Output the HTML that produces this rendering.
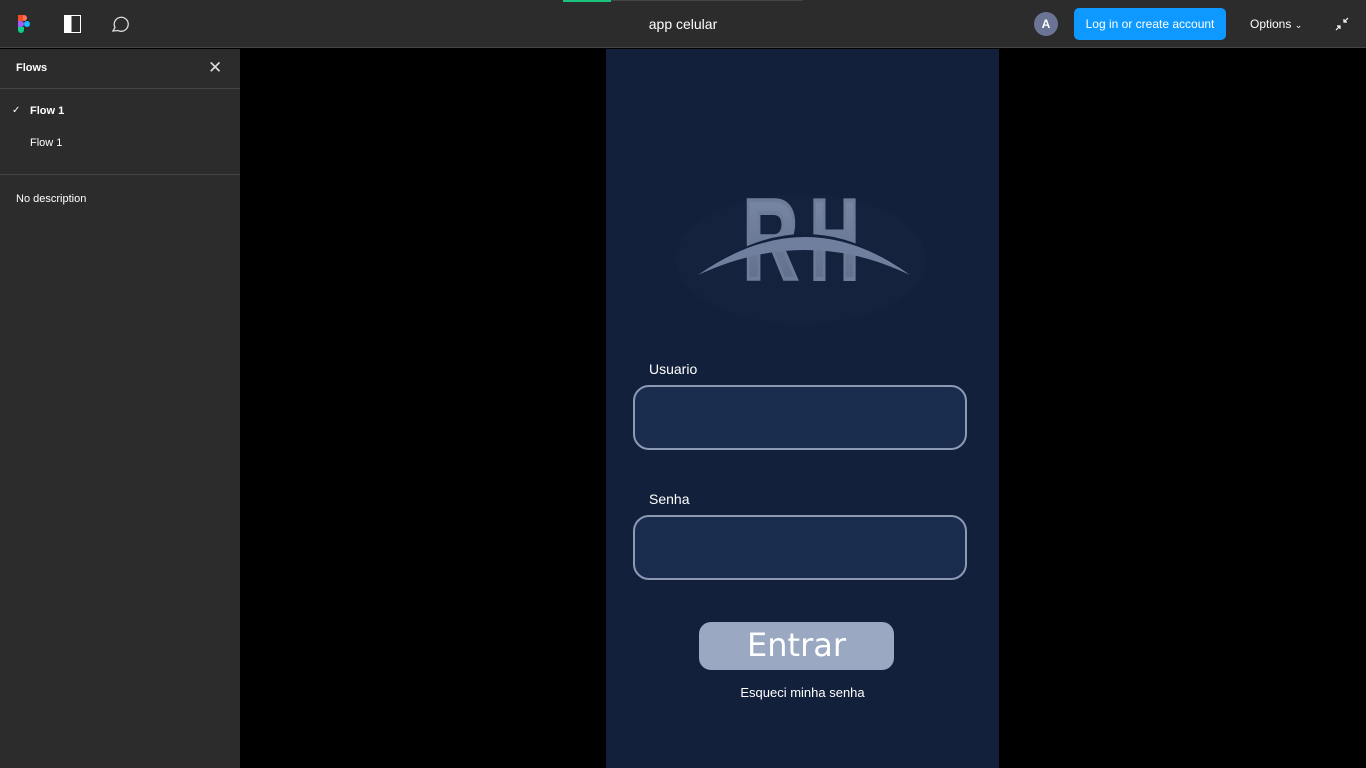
<!DOCTYPE html>
<html><head><meta charset="utf-8"><style>
*{margin:0;padding:0;box-sizing:border-box}
body{width:1366px;height:768px;background:#000;font-family:"Liberation Sans",sans-serif;position:relative;overflow:hidden}
.top{position:absolute;left:0;top:0;width:1366px;height:48px;background:#2c2c2c;border-bottom:1px solid #444}
.side{position:absolute;left:0;top:49px;width:240px;height:719px;background:#2c2c2c;color:#fff;font-size:11px}
.phone{position:absolute;left:606px;top:49px;width:393px;height:719px;background:#13203b}
.lbl{position:absolute;color:#fff;font-size:14px;font-family:"Liberation Sans",sans-serif}
.inp{position:absolute;left:27px;width:334px;height:65px;border:2px solid #8d99b3;border-radius:16px;background:#192c4e}
</style></head><body>
<div class="top">
<div style="position:absolute;left:563px;top:0;width:240px;height:1px;background:#444"></div>
<div style="position:absolute;left:563px;top:0;width:48px;height:2px;background:#1bc47d"></div>
<svg style="position:absolute;left:17px;top:14px" width="14" height="20" viewBox="0 0 14 20">
<rect x="1" y="1" width="6" height="6" rx="3" fill="#f24e1e"/><rect x="4" y="1" width="6" height="6" rx="3" fill="#ff7262"/><rect x="1" y="1" width="5" height="6" fill="#f24e1e"/>
<rect x="1" y="7" width="6" height="6" rx="3" fill="#a259ff"/><rect x="1" y="7" width="4" height="6" fill="#a259ff"/>
<circle cx="10" cy="10" r="3" fill="#1abcfe"/>
<rect x="1" y="13" width="6" height="6" rx="3" fill="#0acf83"/><rect x="1" y="13" width="6" height="3" fill="#0acf83"/></svg>
<div style="position:absolute;left:64px;top:15px;width:17px;height:18px;border:1.5px solid #fff;background:linear-gradient(90deg,#fff 45%,transparent 45%)"></div>
<svg style="position:absolute;left:110px;top:15px" width="19" height="18" viewBox="0 0 19 18"><path d="M3 16 L5 12.5 A7 7 0 1 1 8 15.5 Z" fill="none" stroke="#ddd" stroke-width="1.3"/></svg>
<div style="position:absolute;left:0;width:1366px;top:16px;text-align:center;color:#fff;font-size:14px">app celular</div>
<div style="position:absolute;left:1034px;top:12px;width:24px;height:24px;border-radius:50%;background:#6a7494;color:#fff;font-size:12px;text-align:center;line-height:24px;font-weight:bold">A</div>
<div style="position:absolute;left:1074px;top:8px;width:152px;height:32px;border-radius:5px;background:#0d99ff;color:#fff;font-size:12px;text-align:center;line-height:32px">Log in or create account</div>
<div style="position:absolute;left:1250px;top:17px;color:#fff;font-size:12px">Options <span style="font-size:9px">&#8964;</span></div>
<svg style="position:absolute;left:1334px;top:16px" width="16" height="16" viewBox="0 0 16 16" stroke="#fff" stroke-width="1.2" fill="none"><path d="M2 14 L6 10 M3 10 H6 V13 M14 2 L10 6 M10 3 V6 H13"/></svg>
</div>
<div class="side">
<div style="position:absolute;left:16px;top:13px;font-weight:bold">Flows</div>
<div style="position:absolute;left:208px;top:9px;font-size:17px;color:#ddd">&#10005;</div>
<div style="position:absolute;left:0;top:39px;width:240px;height:1px;background:#444"></div>
<div style="position:absolute;left:12px;top:56px;font-size:10px">&#10003;</div>
<div style="position:absolute;left:30px;top:56px;font-weight:bold">Flow 1</div>
<div style="position:absolute;left:30px;top:88px">Flow 1</div>
<div style="position:absolute;left:0;top:125px;width:240px;height:1px;background:#444"></div>
<div style="position:absolute;left:16px;top:144px">No description</div>
</div>
<div class="phone">
<svg style="position:absolute;left:70px;top:140px" width="250" height="140" viewBox="0 0 250 140">
<defs><linearGradient id="g" x1="0" y1="0" x2="0" y2="1"><stop offset="0" stop-color="#7d8ca8"/><stop offset="1" stop-color="#5b6a88"/></linearGradient></defs>
<ellipse cx="125" cy="70" rx="125" ry="65" fill="#14223e"/>
<text x="67" y="90" font-family="Liberation Sans" font-weight="bold" font-size="114" fill="url(#g)" stroke="#6d7c99" stroke-width="4" textLength="55" lengthAdjust="spacingAndGlyphs">R</text>
<text x="134" y="90" font-family="Liberation Sans" font-weight="bold" font-size="114" fill="url(#g)" stroke="#6d7c99" stroke-width="4" textLength="49" lengthAdjust="spacingAndGlyphs">H</text>
<path d="M22 86 Q130 4 234 86 Q130 28 22 86 Z" fill="#13203b"/>
<path d="M22 86 Q130 10 234 86 Q130 36 22 86 Z" fill="#6f7f9d"/>
</svg>
<div class="lbl" style="left:43px;top:312px">Usuario</div>
<div class="inp" style="top:336px"></div>
<div class="lbl" style="left:43px;top:442px">Senha</div>
<div class="inp" style="top:466px"></div>
<div style="position:absolute;left:93px;top:573px;width:195px;height:48px;border-radius:12px;background:#9aa8c2;color:#fff;font-size:32px;text-align:center;line-height:46px;font-family:'DejaVu Sans',sans-serif">Entrar</div>
<div class="lbl" style="left:0;width:393px;text-align:center;top:636px;font-size:13px">Esqueci minha senha</div>
</div>
</body></html>
